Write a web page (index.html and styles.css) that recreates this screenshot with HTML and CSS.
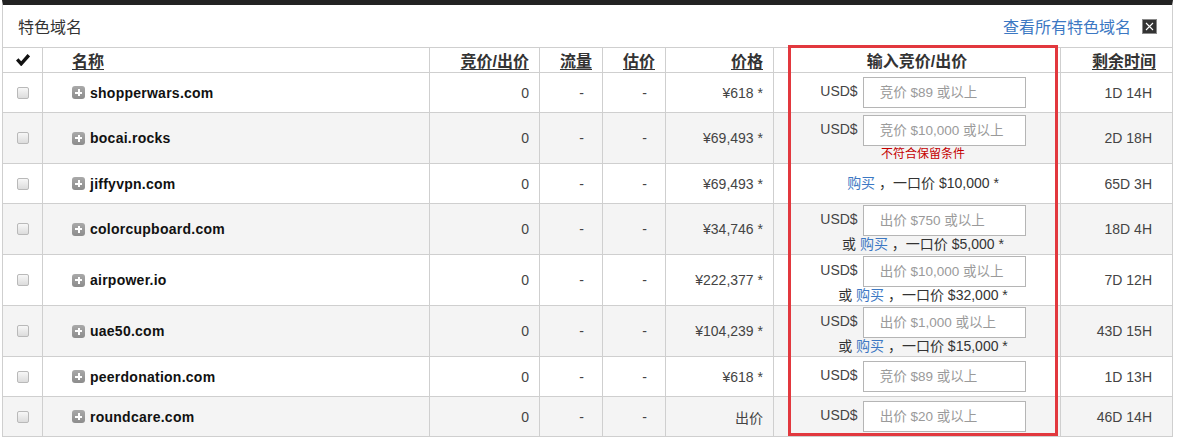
FILE: index.html
```html
<!DOCTYPE html>
<html lang="zh-CN">
<head>
<meta charset="utf-8">
<title>特色域名</title>
<link rel="stylesheet" href="styles.css">
</head>
<body>
<div class="panel">
  <div class="panel-head">
    <span class="title">特色域名</span>
    <div class="head-right">
      <a class="link" href="#">查看所有特色域名</a>
      <span class="close"><svg width="15" height="15" viewBox="0 0 15 15"><rect x="0.5" y="0.5" width="14" height="14" fill="#333" stroke="#8a8a8a"/><path d="M4 4 L11 11 M11 4 L4 11" stroke="#fff" stroke-width="1.1"/></svg></span>
    </div>
  </div>

  <div class="grid">
    <div class="row head">
      <div class="c c-chk"><svg width="14" height="12" viewBox="0 0 14 12"><path d="M1.2 5.4 L5.2 9.8 L12.8 1.2" fill="none" stroke="#111" stroke-width="3.4"/></svg></div>
      <div class="c c-name"><a class="sort" href="#">名称</a></div>
      <div class="c c-r"><a class="sort" href="#">竞价/出价</a></div>
      <div class="c c-r"><a class="sort" href="#">流量</a></div>
      <div class="c c-r"><a class="sort" href="#">估价</a></div>
      <div class="c c-r"><a class="sort" href="#">价格</a></div>
      <div class="c c-bidh">输入竞价/出价</div>
      <div class="c c-r c-timeh"><a class="sort" href="#">剩余时间</a></div>
    </div>

    <div class="row short">
      <div class="c c-chk"><input type="checkbox" class="cb"></div>
      <div class="c c-name"><span class="plus"></span><span class="domain">shopperwars.com</span></div>
      <div class="c c-r">0</div>
      <div class="c c-r c-dash">-</div>
      <div class="c c-r c-dash">-</div>
      <div class="c c-r">¥618 *</div>
      <div class="c c-bid"><div class="bidline"><span class="cur">USD$</span><input class="amt" type="text" placeholder="竞价 $89 或以上"></div></div>
      <div class="c c-r c-time">1D 14H</div>
    </div>

    <div class="row tall alt">
      <div class="c c-chk"><input type="checkbox" class="cb"></div>
      <div class="c c-name"><span class="plus"></span><span class="domain">bocai.rocks</span></div>
      <div class="c c-r">0</div>
      <div class="c c-r c-dash">-</div>
      <div class="c c-r c-dash">-</div>
      <div class="c c-r">¥69,493 *</div>
      <div class="c c-bid"><div class="bidline"><span class="cur">USD$</span><input class="amt" type="text" placeholder="竞价 $10,000 或以上"></div><div class="err">不符合保留条件</div></div>
      <div class="c c-r c-time">2D 18H</div>
    </div>

    <div class="row short">
      <div class="c c-chk"><input type="checkbox" class="cb"></div>
      <div class="c c-name"><span class="plus"></span><span class="domain">jiffyvpn.com</span></div>
      <div class="c c-r">0</div>
      <div class="c c-r c-dash">-</div>
      <div class="c c-r c-dash">-</div>
      <div class="c c-r">¥69,493 *</div>
      <div class="c c-bid"><div class="buy"><a class="link" href="#">购买</a> ，一口价 $10,000 *</div></div>
      <div class="c c-r c-time">65D 3H</div>
    </div>

    <div class="row tall alt">
      <div class="c c-chk"><input type="checkbox" class="cb"></div>
      <div class="c c-name"><span class="plus"></span><span class="domain">colorcupboard.com</span></div>
      <div class="c c-r">0</div>
      <div class="c c-r c-dash">-</div>
      <div class="c c-r c-dash">-</div>
      <div class="c c-r">¥34,746 *</div>
      <div class="c c-bid"><div class="bidline"><span class="cur">USD$</span><input class="amt" type="text" placeholder="出价 $750 或以上"></div><div class="buy">或 <a class="link" href="#">购买</a> ，一口价 $5,000 *</div></div>
      <div class="c c-r c-time">18D 4H</div>
    </div>

    <div class="row tall">
      <div class="c c-chk"><input type="checkbox" class="cb"></div>
      <div class="c c-name"><span class="plus"></span><span class="domain">airpower.io</span></div>
      <div class="c c-r">0</div>
      <div class="c c-r c-dash">-</div>
      <div class="c c-r c-dash">-</div>
      <div class="c c-r">¥222,377 *</div>
      <div class="c c-bid"><div class="bidline"><span class="cur">USD$</span><input class="amt" type="text" placeholder="出价 $10,000 或以上"></div><div class="buy">或 <a class="link" href="#">购买</a> ，一口价 $32,000 *</div></div>
      <div class="c c-r c-time">7D 12H</div>
    </div>

    <div class="row tall alt">
      <div class="c c-chk"><input type="checkbox" class="cb"></div>
      <div class="c c-name"><span class="plus"></span><span class="domain">uae50.com</span></div>
      <div class="c c-r">0</div>
      <div class="c c-r c-dash">-</div>
      <div class="c c-r c-dash">-</div>
      <div class="c c-r">¥104,239 *</div>
      <div class="c c-bid"><div class="bidline"><span class="cur">USD$</span><input class="amt" type="text" placeholder="出价 $1,000 或以上"></div><div class="buy">或 <a class="link" href="#">购买</a> ，一口价 $15,000 *</div></div>
      <div class="c c-r c-time">43D 15H</div>
    </div>

    <div class="row short">
      <div class="c c-chk"><input type="checkbox" class="cb"></div>
      <div class="c c-name"><span class="plus"></span><span class="domain">peerdonation.com</span></div>
      <div class="c c-r">0</div>
      <div class="c c-r c-dash">-</div>
      <div class="c c-r c-dash">-</div>
      <div class="c c-r">¥618 *</div>
      <div class="c c-bid"><div class="bidline"><span class="cur">USD$</span><input class="amt" type="text" placeholder="竞价 $89 或以上"></div></div>
      <div class="c c-r c-time">1D 13H</div>
    </div>

    <div class="row short alt">
      <div class="c c-chk"><input type="checkbox" class="cb"></div>
      <div class="c c-name"><span class="plus"></span><span class="domain">roundcare.com</span></div>
      <div class="c c-r">0</div>
      <div class="c c-r c-dash">-</div>
      <div class="c c-r c-dash">-</div>
      <div class="c c-r">出价</div>
      <div class="c c-bid"><div class="bidline"><span class="cur">USD$</span><input class="amt" type="text" placeholder="出价 $20 或以上"></div></div>
      <div class="c c-r c-time">46D 14H</div>
    </div>
  </div>

  <div class="highlight"></div>
</div>
</body>
</html>
```

FILE: styles.css
```css
* { box-sizing: border-box; }

body {
  margin: 0;
  background: #fff;
  font-family: "Liberation Sans", Arial, "Noto Sans CJK SC", sans-serif;
  font-size: 14px;
  color: #444;
}

.panel {
  position: relative;
  margin-left: 2px;
  width: 1171px;
  border-top: 5px solid #222;
  border-left: 1px solid #cfcfcf;
  border-right: 1px solid #cfcfcf;
}

.panel-head {
  height: 43px;
  border-bottom: 1px solid #cfcfcf;
  display: flex;
  align-items: center;
  justify-content: space-between;
  padding: 0 15px 0 15px;
}

.title {
  font-size: 16px;
  color: #333;
}

.head-right {
  display: flex;
  align-items: center;
  gap: 11px;
}

.link {
  color: #3c78c3;
  text-decoration: none;
}

.head-right .link { font-size: 16px; }

.close { display: flex; }

.row {
  display: grid;
  grid-template-columns: 40px 387px 110px 63px 63px 108px 287px 111px;
  border-bottom: 1px solid #cfcfcf;
  background: #fff;
}

.row.head { height: 25px; }
.row.short { height: 40px; }
.row.tall { height: 51px; }
.row.alt { background: #f4f4f4; }

.c {
  border-right: 1px solid #cfcfcf;
  display: flex;
  align-items: center;
  min-width: 0;
  white-space: nowrap;
}

.c:last-child { border-right: none; }

.c-chk { justify-content: center; }

.c-name { padding-left: 29px; }

.c-r {
  justify-content: flex-end;
  padding-right: 10px;
}

.c-dash { padding-right: 18px; }

.c-time { padding-right: 20px; }
.c-timeh { padding-right: 16px; }

.sort {
  color: #333;
  font-weight: bold;
  font-size: 16px;
  text-decoration: underline;
  text-underline-offset: 2px;
  text-decoration-thickness: 1px;
}

.c-bidh {
  justify-content: center;
  color: #333;
  font-weight: bold;
  font-size: 16px;
}

.cb {
  appearance: none;
  -webkit-appearance: none;
  width: 12px;
  height: 12px;
  margin: 0;
  border: 1px solid #b9b9b9;
  border-radius: 2px;
  background: linear-gradient(#f7f7f7, #dcdcdc);
}

.plus {
  width: 13px;
  height: 13px;
  border-radius: 3px;
  background:
    linear-gradient(#fff, #fff) center / 7px 2px no-repeat,
    linear-gradient(#fff, #fff) center / 2px 7px no-repeat,
    linear-gradient(#a9a9a9, #8c8c8c);
  margin-right: 5px;
  flex: none;
}

.domain {
  font-weight: bold;
  color: #111;
  letter-spacing: 0.25px;
}

.c-bid {
  flex-direction: column;
  justify-content: center;
  align-items: center;
  padding-left: 12px;
}

.bidline {
  display: flex;
  align-items: center;
  gap: 5px;
}

.cur {
  color: #444;
  margin-bottom: 3px;
}

.amt {
  width: 163px;
  height: 31px;
  margin: 0;
  border: 1px solid #b5b5b5;
  background: #fff;
  padding: 0 0 0 16px;
  font-family: "Liberation Sans", Arial, "Noto Sans CJK SC", sans-serif;
  font-size: 13.5px;
  color: #333;
}

.amt::placeholder { color: #9a9a9a; }

.err {
  color: #c40000;
  font-size: 12px;
  line-height: 16px;
}

.buy {
  line-height: 17px;
  color: #333;
}

.highlight {
  position: absolute;
  left: 785px;
  top: 40px;
  width: 270px;
  height: 391px;
  border: 3px solid #e2383e;
  pointer-events: none;
}
```
